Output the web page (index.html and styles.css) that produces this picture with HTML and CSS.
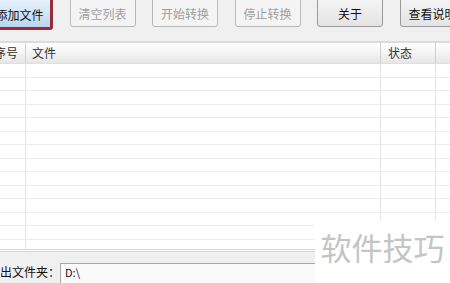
FILE: index.html
```html
<!DOCTYPE html>
<html lang="zh">
<head>
<meta charset="utf-8">
<link rel="stylesheet" href="styles.css">
</head>
<body>
<div class="app">
  <div class="toolbar">
    <button class="btn focused">添加文件</button>
    <button class="btn disabled">清空列表</button>
    <button class="btn disabled">开始转换</button>
    <button class="btn disabled">停止转换</button>
    <button class="btn">关于</button>
    <button class="btn">查看说明</button>
  </div>
  <div class="table">
    <div class="thead">
      <div class="c1 th">序号</div>
      <div class="c2 th">文件</div>
      <div class="c3 th">状态</div>
      <div class="c4 th"></div>
    </div>
    <div class="tbody">
      <div class="row"><div class="c1"></div><div class="c2"></div><div class="c3"></div><div class="c4"></div></div>
      <div class="row"><div class="c1"></div><div class="c2"></div><div class="c3"></div><div class="c4"></div></div>
      <div class="row"><div class="c1"></div><div class="c2"></div><div class="c3"></div><div class="c4"></div></div>
      <div class="row"><div class="c1"></div><div class="c2"></div><div class="c3"></div><div class="c4"></div></div>
      <div class="row"><div class="c1"></div><div class="c2"></div><div class="c3"></div><div class="c4"></div></div>
      <div class="row"><div class="c1"></div><div class="c2"></div><div class="c3"></div><div class="c4"></div></div>
      <div class="row"><div class="c1"></div><div class="c2"></div><div class="c3"></div><div class="c4"></div></div>
      <div class="row"><div class="c1"></div><div class="c2"></div><div class="c3"></div><div class="c4"></div></div>
      <div class="row"><div class="c1"></div><div class="c2"></div><div class="c3"></div><div class="c4"></div></div>
      <div class="row"><div class="c1"></div><div class="c2"></div><div class="c3"></div><div class="c4"></div></div>
      <div class="row"><div class="c1"></div><div class="c2"></div><div class="c3"></div><div class="c4"></div></div>
      <div class="row"><div class="c1"></div><div class="c2"></div><div class="c3"></div><div class="c4"></div></div>
      <div class="row"><div class="c1"></div><div class="c2"></div><div class="c3"></div><div class="c4"></div></div>
      <div class="row"><div class="c1"></div><div class="c2"></div><div class="c3"></div><div class="c4"></div></div>
    </div>
  </div>
  <div class="footer">
    <span class="label">输出文件夹：</span>
    <div class="input">D:\</div>
  </div>
  <div class="watermark">软件技巧</div>
</div>
</body>
</html>
```

FILE: styles.css
```css
html, body {
  margin: 0;
  padding: 0;
}
body {
  width: 450px;
  height: 283px;
  overflow: hidden;
  background: #f0f0f0;
  font-family: "Noto Sans CJK SC", "Noto Sans", sans-serif;
  font-size: 12px;
  color: #222;
}
.app {
  position: relative;
  width: 450px;
  height: 283px;
  overflow: hidden;
  display: flex;
  flex-direction: column;
}
.toolbar {
  height: 43px;
  flex: none;
  display: flex;
  gap: 16.5px;
  margin-left: -14px;
  border-bottom: 2px solid #dcdcdc;
  box-sizing: border-box;
}
.btn {
  flex: none;
  width: 66px;
  height: 32px;
  margin-top: -5px;
  border: 1px solid #9a9a9a;
  border-radius: 3px;
  background: linear-gradient(#f6f6f6, #e4e4e4);
  font-family: inherit;
  font-size: 12px;
  color: #111;
  padding: 5px 0 0;
  line-height: 16px;
}
.btn.disabled {
  border-color: #b8b8b8;
  background: #f4f4f4;
  color: #a0a0a0;
}
.btn.focused {
  border: 3px solid #9c2a3a;
  height: 35px;
  width: 67px;
  background: linear-gradient(#eaf4fc, #cde3f5 60%, #b9d6ef);
  padding-right: 0;
}
.table {
  flex: none;
  height: 209px;
  background: #fff;
  border-bottom: 3px double #d6d6d6;
  box-sizing: border-box;
  overflow: hidden;
}
.thead {
  display: flex;
  height: 20px;
  background: linear-gradient(#ffffff, #f4f4f4 50%, #e6e6e6);
  border-bottom: 1px solid #e0e0e0;
}
.th {
  line-height: 19px;
  color: #333;
  box-sizing: border-box;
}
.c1 { width: 26px; flex: none; border-right: 1px solid #e4e4e4; box-sizing: border-box; text-indent: -6px; overflow: hidden; white-space: nowrap; }
.c2 { width: 355px; flex: none; border-right: 1px solid #e4e4e4; box-sizing: border-box; padding-left: 6px; }
.c3 { width: 55px; flex: none; border-right: 1px solid #e4e4e4; box-sizing: border-box; padding-left: 7px; }
.c4 { flex: 1; }
.thead .c1, .thead .c2, .thead .c3 { border-right-color: #d0d0d0; }
.row {
  display: flex;
  height: 13.5px;
  border-bottom: 1px solid #ebebeb;
  box-sizing: border-box;
}
.footer {
  flex: 1;
  display: flex;
  align-items: flex-end;
  gap: 0;
  margin-left: -12px;
}
.label {
  line-height: 20px;
  margin-bottom: 1px;
  color: #111;
}
.input {
  width: 300px;
  height: 21px;
  margin-bottom: -1px;
  background: #fafafa;
  border: 1px solid #a8a8a8;
  box-sizing: border-box;
  padding-left: 4px;
  line-height: 16px;
  font-size: 11px;
  color: #111;
}
.watermark {
  position: absolute;
  right: 0;
  bottom: 0;
  width: 135px;
  height: 62px;
  background: #fff;
  color: #c4c4c4;
  font-size: 31px;
  line-height: 52px;
  text-align: center;
  box-sizing: border-box;
  white-space: nowrap;
}
```
